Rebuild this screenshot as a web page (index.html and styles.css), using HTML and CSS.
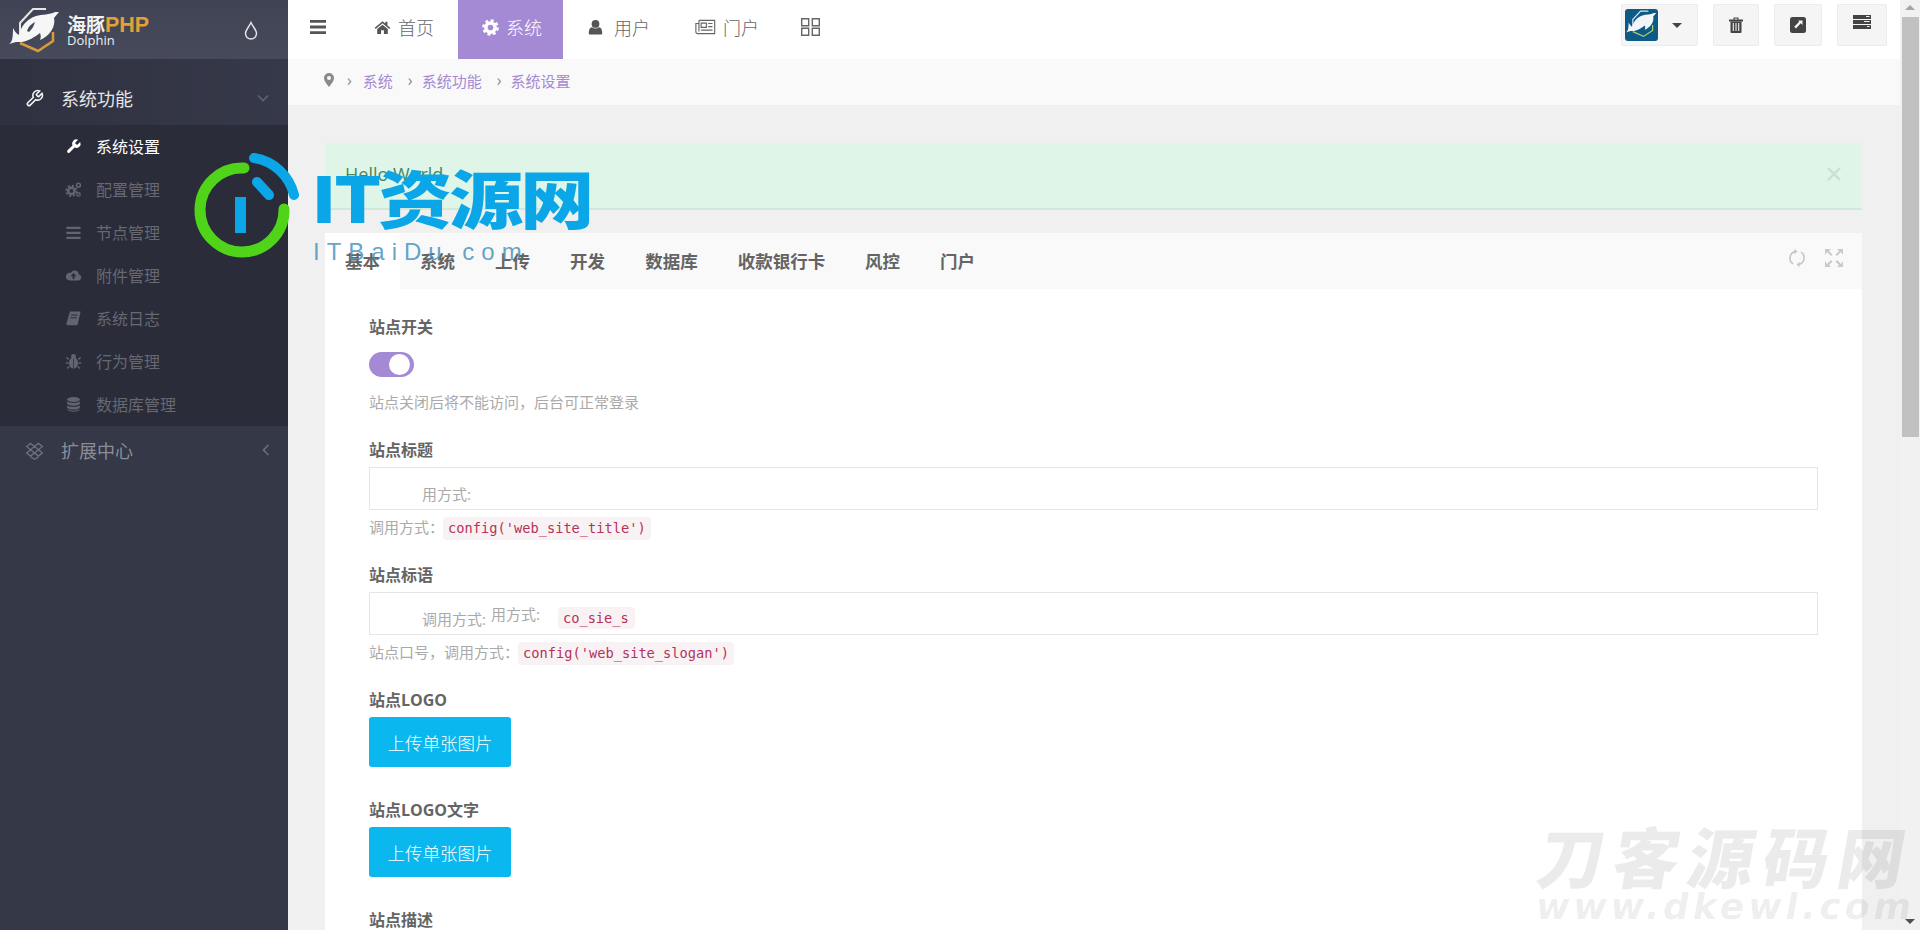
FILE: index.html
```html
<!DOCTYPE html>
<html lang="zh-CN">
<head>
<meta charset="utf-8">
<title>海豚PHP</title>
<link rel="stylesheet" href="styles.css">
</head>
<body>
<aside class="sidebar">
  <div class="brand">
    <svg class="brand-mark" viewBox="9 5 52 47">
      <path d="M20 36V22L33 8h13" fill="none" stroke="#e6e6e6" stroke-width="2"/>
      <path d="M53 31v9L38 50l-18-8" fill="none" stroke="#d99a3a" stroke-width="2.500"/>
      <path d="M9 43c3-2 4-5 4-16 2 4 4 6 6 7 2-9 8-16 17-19 6-2 14-1 19-4h4l-5 6c2 8-4 18-14 22 1-3 1-4 0-7-5 4-12 8-18 9h-6z" fill="#f6f6f6"/>
      <path d="M27 30c1-4 4-7 8-9-1 4-3 7-6 10z" fill="#454959"/>
    </svg>
    <div class="brand-text">
      <div class="brand-name"><span class="brand-cn">海豚</span><span class="brand-php">PHP</span></div>
      <div class="brand-en">Dolphin</div>
    </div>
    <svg class="drop" viewBox="0 0 14 19"><path d="M7 1.500C5 6 1.500 9 1.500 12.500a5.500 5.500 0 0 0 11 0C12.500 9 9 6 7 1.500z" fill="none" stroke="#e4e4e8" stroke-width="1.400"/></svg>
  </div>
  <div class="top-item is-open">
    <svg class="top-icon" viewBox="0 0 24 24"><path d="M14.700 6.300a1 1 0 0 0 0 1.400l1.600 1.600a1 1 0 0 0 1.400 0l3.770-3.770a6 6 0 0 1-7.940 7.940l-6.910 6.910a2.120 2.120 0 0 1-3-3l6.910-6.910a6 6 0 0 1 7.940-7.940l-3.760 3.760z" fill="none" stroke="#f0f0f0" stroke-width="2"/></svg>
    <span class="top-label">系统功能</span>
    <svg class="chev-down" viewBox="0 0 12 8"><path d="M1 1.500 6 6.500 11 1.500" fill="none" stroke="#5f6372" stroke-width="1.600"/></svg>
  </div>
  <ul class="sub-list">
    <li class="sub-item is-active">
      <svg class="sub-icon" viewBox="0 0 24 24"><path d="M14.700 6.300a1 1 0 0 0 0 1.400l1.600 1.600a1 1 0 0 0 1.400 0l3.770-3.770a6 6 0 0 1-7.940 7.940l-6.910 6.910a2.120 2.120 0 0 1-3-3l6.910-6.910a6 6 0 0 1 7.940-7.940l-3.760 3.760z" fill="#fff"/></svg>
      <span>系统设置</span>
    </li>
    <li class="sub-item">
      <svg class="sub-icon" viewBox="0 0 24 24"><circle cx="9" cy="14" r="4.500" fill="none" stroke="#62646f" stroke-width="3.500"/><circle cx="9" cy="14" r="7.300" fill="none" stroke="#62646f" stroke-width="2.600" stroke-dasharray="3 2.700"/><circle cx="19" cy="6" r="2.700" fill="none" stroke="#62646f" stroke-width="2.200"/><circle cx="19" cy="19" r="2.400" fill="none" stroke="#62646f" stroke-width="2"/></svg>
      <span>配置管理</span>
    </li>
    <li class="sub-item">
      <svg class="sub-icon" viewBox="0 0 24 24"><path d="M2 4h20v3H2zM2 11h20v3H2zM2 18h20v3H2z" fill="#62646f"/></svg>
      <span>节点管理</span>
    </li>
    <li class="sub-item">
      <svg class="sub-icon" viewBox="0 0 24 24"><path d="M19.500 10.500a6 6 0 0 0-11.500-2A5 5 0 0 0 5 18.500 3 3 0 0 0 6 19h13a4.300 4.300 0 0 0 .500-8.500z" fill="#62646f"/><path d="M12 8.500 8 13h2.700v4h2.600v-4H16z" fill="#2a2c39"/></svg>
      <span>附件管理</span>
    </li>
    <li class="sub-item">
      <svg class="sub-icon" viewBox="0 0 24 24"><path d="M7 2h15l-4 18a2 2 0 0 1-2 1.500H4a2 2 0 0 1-2-2.500z" fill="#62646f"/><path d="M8.500 7h9M7.500 11h9" stroke="#2a2c39" stroke-width="1.500"/></svg>
      <span>系统日志</span>
    </li>
    <li class="sub-item">
      <svg class="sub-icon" viewBox="0 0 24 24"><ellipse cx="12" cy="14" rx="6.500" ry="8" fill="#62646f"/><circle cx="12" cy="5" r="3.500" fill="#62646f"/><path d="M5 9 2 6M19 9l3-3M5 14H1M19 14h4M6 19l-3 3M18 19l3 3" stroke="#62646f" stroke-width="2"/><path d="M12 8v14" stroke="#2a2c39" stroke-width="1"/></svg>
      <span>行为管理</span>
    </li>
    <li class="sub-item">
      <svg class="sub-icon" viewBox="0 0 24 24"><ellipse cx="12" cy="5" rx="9" ry="3.500" fill="#62646f"/><path d="M3 7.500c2 3 16 3 18 0V11c-2 3.500-16 3.500-18 0zM3 13c2 3 16 3 18 0v3.500c-2 3.500-16 3.500-18 0zM3 18.500c2 3 16 3 18 0v1c-2 3.500-16 3.500-18 0z" fill="#62646f"/></svg>
      <span>数据库管理</span>
    </li>
  </ul>
  <div class="top-item is-closed">
    <svg class="top-icon" viewBox="0 0 24 24"><path d="M7 3 2 7l5 4 5-4zM17 3l-5 4 5 4 5-4zM7 11l-5 4 5 4 5-4zM17 11l-5 4 5 4 5-4zM7 20l5 3 5-3" fill="none" stroke="#6c6f7d" stroke-width="1.700"/></svg>
    <span class="top-label">扩展中心</span>
    <svg class="chev-left" viewBox="0 0 8 12"><path d="M6.500 1 1.500 6l5 5" fill="none" stroke="#6c6f7d" stroke-width="1.600"/></svg>
  </div>
</aside>

<div class="main">
  <header class="topbar">
    <svg class="menu-icon" viewBox="0 0 16 14"><path d="M0 0h16v2.800H0zM0 5.600h16v2.800H0zM0 11.200h16V14H0z" fill="#555"/></svg>
    <nav class="nav">
      <a class="nav-item">
        <svg class="nav-icon" viewBox="0 0 24 24"><path d="M12 3 1 12.500l1.400 1.500L12 6l9.600 8 1.400-1.500-4-3.400V4h-3v2.500z" fill="#555"/><path d="M12 8 4.500 14v7h5.500v-5h4v5h5.500v-7z" fill="#555"/></svg>
        <span>首页</span>
      </a>
      <a class="nav-item is-current">
        <svg class="nav-icon" viewBox="0 0 24 24"><circle cx="12" cy="12" r="6.500" fill="none" stroke="#fff" stroke-width="5"/><circle cx="12" cy="12" r="10" fill="none" stroke="#fff" stroke-width="3.500" stroke-dasharray="4.200 3.650"/></svg>
        <span>系统</span>
      </a>
      <a class="nav-item nav-item-user">
        <svg class="nav-icon" viewBox="0 0 24 24"><circle cx="12" cy="7" r="5.500" fill="#555"/><path d="M3.500 22a2 2 0 0 1-1-2c0-5 1.500-8 4.500-8.500 3 2.500 7 2.500 10 0 3 .5 4.500 3.500 4.500 8.500a2 2 0 0 1-1 2z" fill="#555"/></svg>
        <span>用户</span>
      </a>
      <a class="nav-item">
        <svg class="nav-icon nav-icon-wide" viewBox="0 0 24 18"><path d="M4.500 1.500h18v15H3a2 2 0 0 1-2-2V5h3.500M4.500 1.500V14" fill="none" stroke="#666" stroke-width="1.300"/><path d="M7 4.500h6v5H7z" fill="none" stroke="#666" stroke-width="1.300"/><path d="M15 5h5M15 8.500h5M7 12.500h13" stroke="#666" stroke-width="1.300"/></svg>
        <span>门户</span>
      </a>
      <a class="nav-item nav-item-grid">
        <svg class="grid-icon" viewBox="0 0 19 18"><path d="M.700.700h7v7h-7zM11.300.700h7v7h-7zM.700 10.300h7v7h-7zM11.300 10.300h7v7h-7z" fill="none" stroke="#666" stroke-width="1.400"/></svg>
      </a>
    </nav>
    <div class="tools">
      <div class="tool tool-user">
        <div class="avatar">
          <svg viewBox="7 5 55 52"><path d="M20 36V22L33 8h13" fill="none" stroke="#dbe7ee" stroke-width="2"/><path d="M53 31v9L38 50l-18-8" fill="none" stroke="#b5cf6a" stroke-width="2"/><path d="M9 43c3-2 4-5 4-16 2 4 4 6 6 7 2-9 8-16 17-19 6-2 14-1 19-4h4l-5 6c2 8-4 18-14 22 1-3 1-4 0-7-5 4-12 8-18 9h-6z" fill="#f2f6f8"/></svg>
        </div>
        <span class="caret"></span>
      </div>
      <div class="tool tool-trash">
        <svg viewBox="0 0 14 16"><path d="M5 2.500V1h4v1.500M0 3h14v1H0z" fill="none" stroke="#444" stroke-width="1.100"/><path d="M1.500 4.500h11V15a1 1 0 0 1-1 1h-9a1 1 0 0 1-1-1z" fill="#444"/><path d="M4.300 6v8M7 6v8M9.700 6v8" stroke="#f4f4f4" stroke-width="1.100"/></svg>
      </div>
      <div class="tool tool-share">
        <svg viewBox="0 0 16 16"><rect width="16" height="16" rx="2.500" fill="#444"/><path d="M8 3.500h4.500V8l-1.700-1.700L6 11.500 4.200 9.800l5-5z" fill="#f4f4f4"/></svg>
      </div>
      <div class="tool tool-server">
        <svg viewBox="0 0 18 14"><path d="M0 0h18v4H0zM0 5h18v4H0zM0 10h18v4H0z" fill="#444"/><path d="M13 1.500h3.500M11 6.500h5.500M14 11.500h2.500" stroke="#f4f4f4" stroke-width="1.100"/></svg>
      </div>
    </div>
  </header>

  <div class="crumbs">
    <svg class="pin" viewBox="0 0 10 14"><path d="M5 0a5 5 0 0 0-5 5c0 3 3.500 7 5 9 1.500-2 5-6 5-9a5 5 0 0 0-5-5zm0 7a2 2 0 1 1 0-4 2 2 0 0 1 0 4z" fill="#8a8a8a"/></svg>
    <span class="sep">›</span><a>系统</a>
    <span class="sep">›</span><a>系统功能</a>
    <span class="sep">›</span><a>系统设置</a>
  </div>

  <div class="content">
    <div class="alert">
      <span class="alert-text">Hello World</span>
      <svg class="alert-close" viewBox="0 0 14 14"><path d="M1 1l12 12M13 1 1 13" stroke="#c5e3d2" stroke-width="2.400"/></svg>
    </div>

    <section class="card">
      <div class="tabs">
        <a class="tab is-active">基本</a>
        <a class="tab">系统</a>
        <a class="tab">上传</a>
        <a class="tab">开发</a>
        <a class="tab">数据库</a>
        <a class="tab">收款银行卡</a>
        <a class="tab">风控</a>
        <a class="tab">门户</a>
        <div class="tab-tools">
          <svg class="tab-tool" viewBox="0 0 18 18"><path d="M7 2.500A7 7 0 0 0 5 15M11 15.500A7 7 0 0 0 13 3" fill="none" stroke="#c4c4c4" stroke-width="1.500"/><path d="M9.500 2.500 6.500 0v5zM8.500 15.500l3-2.500v5z" fill="#c4c4c4"/></svg>
          <svg class="tab-tool tab-tool-wide" viewBox="0 0 20 20"><path d="M1 7V1h6L5 3l3.500 3.500-1.500 1.500L3 4zM19 7V1h-6l2 2-3.500 3.500 1.500 1.500L17 4zM1 13v6h6l-2-2 3.500-3.500L7 12 3 16zM19 13v6h-6l2-2-3.500-3.500L13 12l4 4z" fill="#c9c9c9"/></svg>
        </div>
      </div>

      <form class="form">
        <div class="group group-switch">
          <label class="label">站点开关</label>
          <div class="switch"><span class="knob"></span></div>
          <p class="help help-switch">站点关闭后将不能访问，后台可正常登录</p>
        </div>

        <div class="group">
          <label class="label">站点标题</label>
          <div class="input"><span class="ghost">用方式:</span></div>
          <p class="help">调用方式：<code class="code">config('web_site_title')</code></p>
        </div>

        <div class="group">
          <label class="label">站点标语</label>
          <div class="input">
            <span class="ghost">调用方式:</span>
            <span class="ghost ghost-raised">用方式:</span>
            <code class="code code-ghost">co_sie_s</code>
          </div>
          <p class="help">站点口号，调用方式：<code class="code">config('web_site_slogan')</code></p>
        </div>

        <div class="group group-upload">
          <label class="label">站点LOGO</label>
          <button type="button" class="upload">上传单张图片</button>
        </div>

        <div class="group group-upload">
          <label class="label">站点LOGO文字</label>
          <button type="button" class="upload">上传单张图片</button>
        </div>

        <div class="group">
          <label class="label">站点描述</label>
        </div>
      </form>
    </section>
  </div>
</div>

<div class="scrollbar">
  <span class="arrow-up"></span>
  <span class="thumb"></span>
  <span class="arrow-down"></span>
</div>

<div class="stamp-it">
  <svg class="stamp-ring" viewBox="0 0 106 107">
    <path d="M51 15A42 42 0 1 0 91 56" fill="none" stroke="#4fd419" stroke-width="11" stroke-linecap="round"/>
    <path d="M61 5A49 49 0 0 1 101 42" fill="none" stroke="#0ba6e8" stroke-width="10" stroke-linecap="round"/>
    <path d="M64 29l12 13" fill="none" stroke="#0ba6e8" stroke-width="10" stroke-linecap="round"/>
    <path d="M42 44h11v36H42z" fill="#0ba6e8"/>
  </svg>
  <div class="stamp-title">IT资源网</div>
  <div class="stamp-url">ITBaiDu.com</div>
</div>

<div class="stamp-dk">
  <div class="stamp-dk-cn">刀客源码网</div>
  <div class="stamp-dk-en">www.dkewl.com</div>
</div>
</body>
</html>
```
FILE: styles.css
```css
* { box-sizing: border-box; }
html, body { margin: 0; height: 930px; overflow: hidden; }
body {
  display: flex;
  position: relative;
  background: #f0f0f0;
  font-family: "Open Sans", "Noto Sans CJK SC", sans-serif;
  color: #646464;
}
ul { list-style: none; margin: 0; padding: 0; }
p { margin: 0; }

/* sidebar */
.sidebar { width: 288px; flex: none; background: #343847; }
.brand {
  height: 59px;
  display: flex;
  align-items: center;
  padding-left: 9px;
  background: linear-gradient(180deg, #3f4354, #464a5a);
}
.brand-mark { width: 52px; height: 47px; flex: none; }
.brand-text { margin-left: 6px; width: 177px; margin-top: 5px; }
.brand-name { font-size: 20px; line-height: 16px; font-weight: 700; display: flex; }
.brand-cn { color: #f2f2f2; font-size: 19px; width: 38px; }
.brand-php { color: #e3a035; font-family: "Liberation Sans", sans-serif; font-size: 21.500px; font-weight: 700; }
.brand-en { color: #eee; font-size: 13px; line-height: 14px; }
.drop { width: 14px; height: 19px; margin-top: 1px; }

.top-item { display: flex; align-items: center; position: relative; padding-left: 25px; }
.is-open { height: 66px; padding-top: 12px; background: linear-gradient(90deg, #2f3140, #363949); }
.is-closed { height: 50px; padding-bottom: 2px; }
.top-icon { width: 19px; height: 19px; flex: none; }
.top-label { margin-left: 17px; font-size: 18px; flex: 1; }
.is-open .top-label { color: #e6e6e8; }
.is-closed .top-label { color: #8b8e9a; }
.chev-down { width: 12px; height: 8px; margin-right: 19px; }
.chev-left { width: 8px; height: 12px; margin-right: 18px; }

.sub-list { background: #2a2c39; }
.sub-item {
  height: 43px;
  display: flex;
  align-items: center;
  padding: 0 0 1px 65px;
  font-size: 16px;
  color: #666872;
}
.sub-item.is-active { color: #fff; }
.sub-icon { width: 17px; height: 17px; margin-right: 14px; flex: none; }

/* main */
.main { width: 1612px; flex: none; display: flex; flex-direction: column; overflow: hidden; }
.topbar { height: 59px; flex: none; background: #fff; display: flex; align-items: center; padding-left: 22px; }
.menu-icon { width: 16px; height: 14px; flex: none; margin: -5px 24px 0 0; }
.nav { display: flex; height: 59px; }
.nav-item {
  display: flex;
  align-items: center;
  gap: 7px;
  padding: 0 24px 5px;
  font-size: 18px;
  font-weight: 300;
  color: #666;
}
.nav-item.is-current { background: #a48ad4; color: #fff; padding: 0 21px 5px 24px; width: 105px; }
.nav-item-user { gap: 10px; padding-right: 21px; }
.nav-item-grid { padding-left: 18px; }
.nav-icon { width: 17px; height: 17px; flex: none; }
.nav-icon-wide { width: 21px; height: 16px; }
.grid-icon { width: 19px; height: 18px; }

.tools { margin-left: auto; display: flex; height: 42px; margin-right: 13px; margin-top: -9px; gap: 15px; }
.tool {
  display: flex;
  align-items: center;
  justify-content: center;
  background: #f5f5f5;
  border: 1px solid #ececec;
  border-radius: 2px;
}
.tool-user { width: 77px; justify-content: flex-start; padding-left: 3px; }
.avatar { width: 33px; height: 32px; background: #0e5a86; border-radius: 3px; }
.avatar svg { display: block; width: 33px; height: 32px; }
.caret { width: 0; height: 0; margin-left: 14px; border: 5px solid transparent; border-top: 5px solid #444; border-bottom: 0; }
.tool-trash { width: 46px; }
.tool-trash svg { width: 14px; height: 16px; }
.tool-share { width: 48px; }
.tool-share svg { width: 16px; height: 16px; }
.tool-server { width: 50px; padding-bottom: 6px; }
.tool-server svg { width: 18px; height: 14px; }

.crumbs {
  height: 46px;
  flex: none;
  background: #f9f9f9;
  display: flex;
  align-items: center;
  padding: 0 0 4px 36px;
  font-size: 15px;
  color: #a48ad4;
}
.pin { width: 10px; height: 14px; flex: none; }
.sep { color: #888; margin: 0 9px 0 15px; font-size: 16px; }
.pin + .sep { margin: 0 11px 0 13px; }

.content { flex: none; padding: 38px 38px 0 37px; }
.alert {
  height: 67px;
  background: #dff5e8;
  border-bottom: 2px solid #cfeadb;
  display: flex;
  align-items: center;
  justify-content: space-between;
  padding: 0 21px 3px 20px;
}
.alert-text { font-size: 18px; color: #46895c; }
.alert-close { width: 14px; height: 14px; }

.card { margin-top: 23px; background: #fff; }
.tabs { display: flex; height: 56px; background: #f9f9f9; align-items: center; }
.tab {
  height: 56px;
  width: 75px;
  display: flex;
  align-items: center;
  justify-content: center;
  padding-bottom: 2px;
  flex: none;
  font-size: 17.500px;
  font-weight: 700;
  color: #646464;
}
.tab:nth-child(5) { width: 93px; }
.tab:nth-child(6) { width: 127px; }
.tab.is-active { background: #fff; }
.tab-tools { margin-left: auto; display: flex; align-items: center; gap: 18px; margin-right: 18px; margin-top: -6px; }
.tab-tool { width: 18px; height: 18px; }
.tab-tool-wide { width: 20px; height: 20px; }

.form { padding: 27px 44px 0; }
.group { margin-bottom: 24px; }
.group-switch { margin-bottom: 26px; }
.group-upload { margin-bottom: 32px; }
.label { display: block; font-size: 16px; line-height: 22px; font-weight: 700; color: #646464; }
.switch {
  width: 45px;
  height: 25px;
  margin-top: 14px;
  border-radius: 13px;
  background: #a48ad4;
  display: flex;
  align-items: center;
  padding-left: 20px;
}
.knob { width: 21px; height: 21px; border-radius: 50%; background: #fff; }
.help { font-size: 15px; line-height: 22px; color: #aaa; margin-top: 6px; }
.help-switch { margin-top: 14px; }
.input {
  height: 43px;
  margin-top: 6px;
  border: 1px solid #e6e6e6;
  background: #fff;
  display: flex;
  align-items: center;
  padding: 9px 0 0 52px;
  font-size: 15px;
  color: #aaa;
}
.ghost { flex: none; }
.ghost-raised { margin: 0 0 10px 5px; }
.code {
  display: inline-block;
  font-family: "DejaVu Sans Mono", monospace;
  font-size: 13.700px;
  line-height: 23px;
  padding: 0 5px;
  margin-left: -1px;
  color: #b5325a;
  background: #f9f2f4;
  border-radius: 4px;
}
.code-ghost { margin: 0 0 0 18px; width: 77px; line-height: 22px; }
.upload {
  display: block;
  width: 142px;
  height: 50px;
  margin-top: 6px;
  border: 0;
  border-radius: 3px;
  background: #0ab7ee;
  color: #fff;
  font-family: inherit;
  font-size: 17.500px;
  font-weight: 300;
  padding: 0;
}

/* scrollbar */
.scrollbar { width: 20px; flex: none; background: #f1f1f1; position: relative; display: flex; flex-direction: column; align-items: center; }
.arrow-up { width: 0; height: 0; margin-top: 5px; border: 5px solid transparent; border-top: 0; border-bottom: 5px solid #a5a5a5; }
.thumb { width: 17px; height: 420px; margin-top: 7px; background: #c1c1c1; }
.arrow-down { width: 0; height: 0; margin-top: auto; margin-bottom: 6px; border: 5px solid transparent; border-bottom: 0; border-top: 5px solid #505050; }

/* stamps laid over the page */
.stamp-it { position: absolute; left: 193px; top: 153px; width: 420px; height: 112px; pointer-events: none; }
.stamp-ring { position: absolute; left: 0; top: 0; width: 106px; height: 107px; }
.stamp-title {
  position: absolute;
  left: 118px;
  top: 9px;
  font-family: "Noto Sans CJK SC", sans-serif;
  font-weight: 900;
  font-size: 74px;
  line-height: 80px;
  letter-spacing: -3px;
  color: #0ba6e8;
  white-space: nowrap;
  transform: scaleY(0.85);
  transform-origin: top left;
}
.stamp-url {
  position: absolute;
  left: 120px;
  top: 85px;
  font-family: "Liberation Sans", sans-serif;
  font-size: 24px;
  line-height: 28px;
  letter-spacing: 7px;
  color: rgba(60, 140, 185, 0.8);
  white-space: nowrap;
}
.stamp-dk { position: absolute; left: 1537px; top: 816px; width: 380px; pointer-events: none; color: rgba(0, 0, 0, 0.08); transform: skewX(-10deg); }
.stamp-dk-cn {
  font-family: "Noto Sans CJK SC", sans-serif;
  font-weight: 900;
  font-size: 66px;
  line-height: 76px;
  letter-spacing: 9px;
  white-space: nowrap;
}
.stamp-dk-en {
  margin-left: 6px;
  font-family: "DejaVu Sans", sans-serif;
  font-weight: 700;
  font-size: 36px;
  line-height: 30px;
  letter-spacing: 4px;
  white-space: nowrap;
}
```
